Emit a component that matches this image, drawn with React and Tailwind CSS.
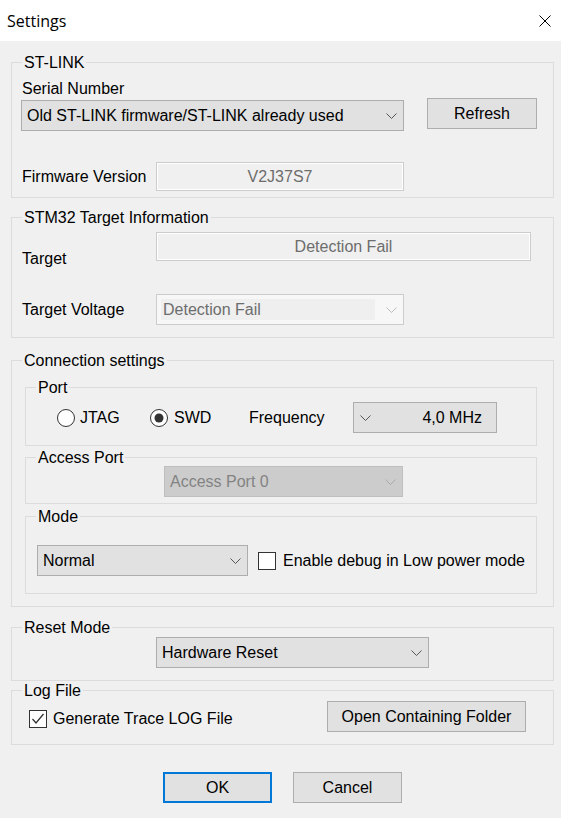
import React from "react";

function Chevron({ color = "#555555" }) {
  return (
    <svg width="11" height="6" viewBox="0 0 11 6" className="block shrink-0">
      <polyline points="0.5,0.5 5.5,5.5 10.5,0.5" fill="none" stroke={color} strokeWidth="1" />
    </svg>
  );
}

function Group({ title, className, children }) {
  return (
    <div className={"border border-[#dcdcdc] " + className}>
      <div className="-mt-[9px] ml-[10px] w-fit bg-[#f0f0f0] px-[2px] leading-[18px]">{title}</div>
      {children}
    </div>
  );
}

function Combo({ text, className }) {
  return (
    <div
      className={
        "flex h-[31px] items-center justify-between border border-[#adadad] bg-[#e1e1e1] pl-[5px] pr-[6px] " +
        className
      }
    >
      <span className="whitespace-nowrap leading-[18px]">{text}</span>
      <Chevron />
    </div>
  );
}

function Button({ children, className }) {
  return (
    <div
      className={
        "flex h-[31px] items-center justify-center bg-[#e1e1e1] leading-[18px] " + className
      }
    >
      {children}
    </div>
  );
}

function ReadOnly({ children, className }) {
  return (
    <div
      className={
        "flex items-center justify-center border border-[#cccccc] bg-[#f0f0f0] text-[#6d6d6d] shadow-[inset_0_0_0_1px_#ffffff] " +
        className
      }
    >
      {children}
    </div>
  );
}

function Radio({ checked }) {
  return (
    <svg width="18" height="18" viewBox="0 0 18 18" className="block shrink-0">
      <circle cx="9" cy="9" r="8.5" fill="#ffffff" stroke="#333333" strokeWidth="1" />
      {checked && <circle cx="9" cy="9" r="4.5" fill="#333333" />}
    </svg>
  );
}

function Checkbox({ checked, className }) {
  return (
    <div className={"h-[18px] w-[18px] shrink-0 border border-[#333333] bg-white " + className}>
      {checked && (
        <svg width="16" height="16" viewBox="0 0 16 16" className="block">
          <polyline points="2.5,8 6,12 13.5,3" fill="none" stroke="#333333" strokeWidth="1.3" />
        </svg>
      )}
    </div>
  );
}

export default function App() {
  return (
    <div className="h-[818px] w-[561px] overflow-hidden bg-[#f0f0f0] font-['Liberation_Sans',Arial,sans-serif] text-[16px] leading-[18px] text-black">
      {/* Title bar */}
      <div className="flex h-[41px] items-center justify-between bg-white pl-[7px] pr-[10px]">
        <span className="font-['Open_Sans','Noto_Sans',sans-serif] text-[16px] leading-[20px]">Settings</span>
        <svg width="12" height="12" viewBox="0 0 12 12" className="block">
          <path d="M0.5 0.5 L11.5 11.5 M11.5 0.5 L0.5 11.5" stroke="#000000" strokeWidth="1" fill="none" />
        </svg>
      </div>

      {/* ST-LINK */}
      <Group title="ST-LINK" className="ml-[11px] mt-[21px] w-[543px] pb-[6px]">
        <div className="ml-[10px] mt-[8px]">Serial Number</div>
        <div className="flex items-start">
          <Combo className="ml-[9px] mt-[2px] w-[383px]" text="Old ST-LINK firmware/ST-LINK already used" />
          <Button className="ml-[23px] w-[110px] border border-[#adadad]">Refresh</Button>
        </div>
        <div className="mt-[31px] flex items-center">
          <div className="ml-[10px] w-[134px]">Firmware Version</div>
          <ReadOnly className="h-[29px] w-[248px]">V2J37S7</ReadOnly>
        </div>
      </Group>

      {/* STM32 Target Information */}
      <Group title="STM32 Target Information" className="ml-[11px] mt-[19px] w-[543px] pb-[12px]">
        <div className="mt-[5px] flex items-start">
          <div className="ml-[10px] w-[134px] pt-[18px]">Target</div>
          <ReadOnly className="h-[29px] w-[375px]">Detection Fail</ReadOnly>
        </div>
        <div className="mt-[26px] flex items-center">
          <div className="ml-[10px] w-[134px]">Target Voltage</div>
          <div className="flex h-[31px] w-[248px] items-center border border-[#cccccc] bg-[#f7f7f7] pl-[4px] pr-[6px]">
            <div className="flex h-[21px] w-[214px] items-center bg-[#efefef] pl-[2px] text-[#6d6d6d]">
              Detection Fail
            </div>
            <div className="ml-auto">
              <Chevron color="#bdbdbd" />
            </div>
          </div>
        </div>
      </Group>

      {/* Connection settings */}
      <Group title="Connection settings" className="ml-[11px] mt-[22px] w-[543px] pb-[12px]">
        <Group title="Port" className="ml-[13px] mt-[17px] w-[512px] pb-[12px]">
          <div className="mt-[5px] flex h-[31px] items-center">
            <div className="ml-[31px] flex w-[93px] items-center gap-[5px]">
              <Radio />
              <span>JTAG</span>
            </div>
            <div className="flex w-[99px] items-center gap-[6px]">
              <Radio checked />
              <span>SWD</span>
            </div>
            <div className="w-[104px]">Frequency</div>
            <div className="flex h-[31px] w-[144px] items-center border border-[#adadad] bg-[#e1e1e1] pl-[6px] pr-[14px]">
              <Chevron />
              <span className="ml-auto">4,0 MHz</span>
            </div>
          </div>
        </Group>

        <Group title="Access Port" className="ml-[13px] mt-[11px] w-[512px] pb-[6px]">
          <div className="-mt-[1px] ml-[138px] flex h-[31px] w-[239px] items-center justify-between border border-[#bfbfbf] bg-[#cccccc] pl-[5px] pr-[6px] text-[#838383]">
            <span>Access Port 0</span>
            <Chevron color="#a9a9a9" />
          </div>
        </Group>

        <Group title="Mode" className="ml-[13px] mt-[12px] w-[512px] pb-[17px]">
          <div className="mt-[19px] flex items-center">
            <Combo className="ml-[11px] w-[211px]" text="Normal" />
            <Checkbox className="ml-[10px]" />
            <span className="ml-[7px] whitespace-nowrap">Enable debug in Low power mode</span>
          </div>
        </Group>
      </Group>

      {/* Reset Mode */}
      <Group title="Reset Mode" className="ml-[11px] mt-[20px] w-[543px] pb-[12px]">
        <Combo className="ml-[144px] w-[273px]" text="Hardware Reset" />
      </Group>

      {/* Log File */}
      <Group title="Log File" className="ml-[11px] mt-[9px] w-[543px] pb-[12px]">
        <div className="mt-[1px] flex items-start">
          <Checkbox checked className="ml-[17px] mt-[9px]" />
          <span className="ml-[6px] mt-[9px] whitespace-nowrap">Generate Trace LOG File</span>
          <Button className="ml-auto mr-[27px] w-[199px] border border-[#adadad]">Open Containing Folder</Button>
        </div>
      </Group>

      {/* Dialog buttons */}
      <div className="mt-[27px] flex gap-[21px] pl-[163px]">
        <Button className="w-[109px] border-2 border-[#0078d7]">OK</Button>
        <Button className="w-[109px] border border-[#adadad]">Cancel</Button>
      </div>
    </div>
  );
}
